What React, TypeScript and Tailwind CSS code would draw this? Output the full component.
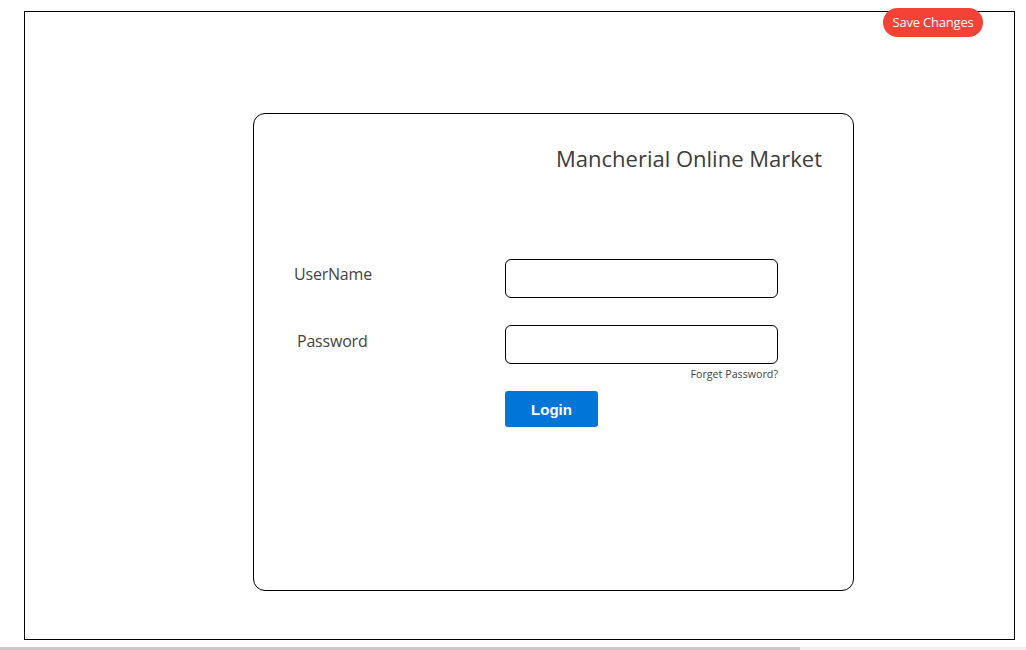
export default function App() {
  return (
    <div className="relative h-[650px] w-[1026px] overflow-hidden bg-white font-['Open_Sans',sans-serif]">
      <div className="pl-[24px] pt-[11px]">
        <div className="relative h-[629px] w-[991px] border border-black">
          <button
            type="button"
            className="absolute left-[858px] top-[-4px] flex h-[29px] w-[100px] items-center justify-center rounded-full bg-[#f44336] text-[13px] tracking-[-0.2px] text-white"
          >
            Save Changes
          </button>

          <div className="ml-[228px] mt-[101px] h-[478px] w-[601px] rounded-[12px] border border-black pt-[30px]">
            <h1 className="pr-[31px] text-right text-[22px] leading-[28px] text-[#3c3c3c]">
              Mancherial Online Market
            </h1>

            <div className="mt-[87px] flex">
              <label className="w-[251px] pl-[40px] pt-[3px] text-[16px] leading-[24px] tracking-[-0.2px] text-[#444]">UserName</label>
              <input className="h-[39px] w-[273px] rounded-[6px] border border-black bg-white outline-none" />
            </div>

            <div className="mt-[27px] flex">
              <label className="w-[251px] pl-[43px] pt-[4px] text-[16px] leading-[24px] tracking-[-0.2px] text-[#444]">Password</label>
              <div className="flex w-[273px] flex-col">
                <input type="password" className="h-[39px] w-[273px] rounded-[6px] border border-black bg-white outline-none" />
                <a className="mt-[3px] self-end text-[10.7px] leading-[14px] text-[#444]">Forget Password?</a>
                <button
                  type="button"
                  className="mt-[10px] h-[36px] w-[93px] rounded-[3px] bg-[#0275d8] pt-[2px] font-['Liberation_Sans',sans-serif] text-[15px] font-bold text-white"
                >
                  Login
                </button>
              </div>
            </div>
          </div>
        </div>
      </div>

      <div className="absolute bottom-0 left-0 flex h-[3px] w-full">
        <div className="h-full w-[800px] bg-[#c8c8c8]" />
        <div className="h-full flex-1 bg-[#f0f0f0]" />
      </div>
    </div>
  );
}
